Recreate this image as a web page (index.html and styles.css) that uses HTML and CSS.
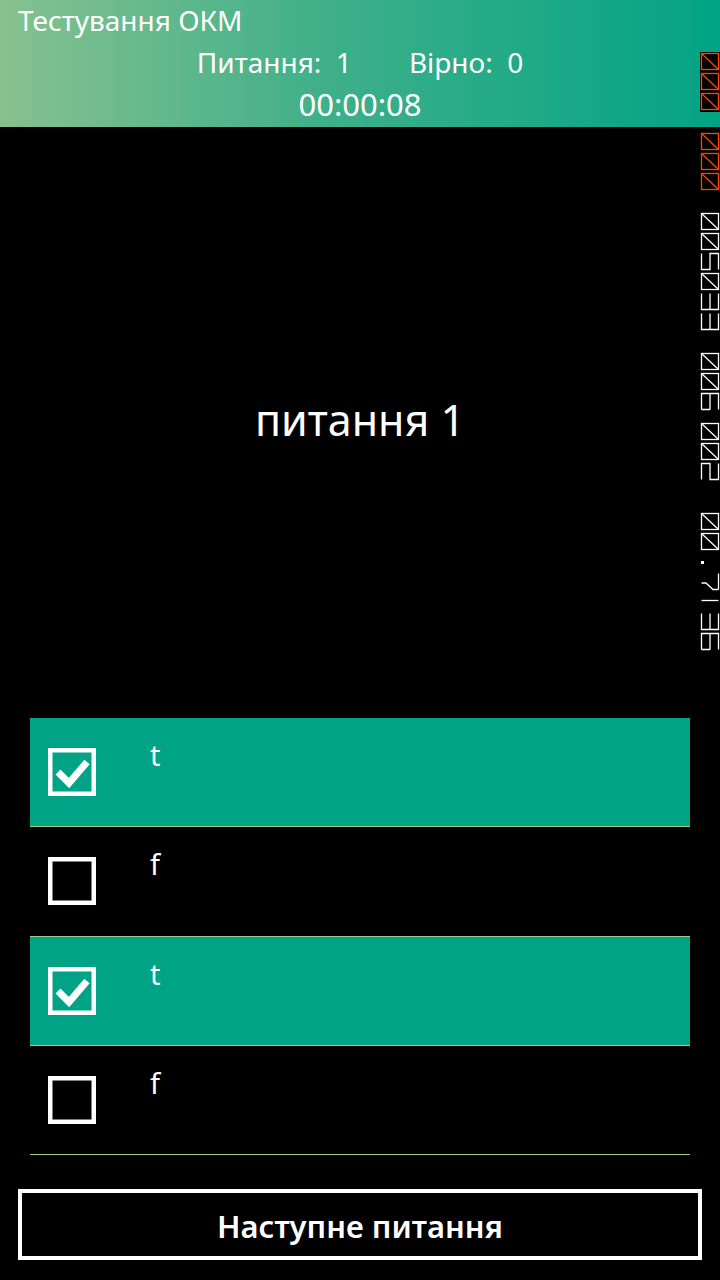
FILE: index.html
```html
<!DOCTYPE html>
<html lang="uk">
<head>
<meta charset="utf-8">
<title>Тестування ОКМ</title>
<link rel="stylesheet" href="styles.css">
</head>
<body>
<div class="screen">
  <header class="header">
    <div class="app-title">Тестування ОКМ</div>
    <div class="stats"><span class="stat">Питання:  1</span><span class="stat">Вірно:  0</span></div>
    <div class="timer">00:00:08</div>
  </header>

  <main class="question">
    <div class="question-text">питання 1</div>
  </main>

  <ul class="answers">
    <li class="answer checked">
      <svg class="checkbox" viewBox="0 0 48 48" width="48" height="48"><rect x="2.25" y="2.25" width="43.5" height="43.5"/><polyline points="10,24 21,35 39,14"/></svg>
      <span class="answer-text">t</span>
    </li>
    <li class="answer">
      <svg class="checkbox" viewBox="0 0 48 48" width="48" height="48"><rect x="2.25" y="2.25" width="43.5" height="43.5"/></svg>
      <span class="answer-text">f</span>
    </li>
    <li class="answer checked">
      <svg class="checkbox" viewBox="0 0 48 48" width="48" height="48"><rect x="2.25" y="2.25" width="43.5" height="43.5"/><polyline points="10,24 21,35 39,14"/></svg>
      <span class="answer-text">t</span>
    </li>
    <li class="answer">
      <svg class="checkbox" viewBox="0 0 48 48" width="48" height="48"><rect x="2.25" y="2.25" width="43.5" height="43.5"/></svg>
      <span class="answer-text">f</span>
    </li>
  </ul>

  <div class="footer">
    <button class="next-button" type="button">Наступне питання</button>
  </div>

  <svg class="fps-counter" viewBox="700 0 20 660" width="20" height="660">
    <defs>
      <g id="gD"><rect x="0.5" y="0.5" width="17" height="16"/><path d="M0.5 0.5L17.5 16.5"/></g>
      <path id="g5" d="M0.5 0.5V16.5H9V0.5H17.5V16.5"/>
      <path id="g3" d="M0.5 0.5V16.5H17.5V0.5M9 0.5V16.5"/>
      <path id="g6" d="M0.5 16.5V0.5H17.5V16.5M9 0.5V16.5M0.5 16.5H9"/>
      <path id="g2" d="M0.5 16.5V0.5H9V16.5H17.5V0.5"/>
      <path id="g7" d="M17.5 0.5V16.5M0.5 10H5L12 16.5H17.5"/>
      <path id="g1" d="M0.5 7.5H17.5"/>
    </defs>
    <rect class="fps-back" x="700" y="52" width="20" height="60"/>
    <g class="fps-warn">
      <use href="#gD" x="701" y="53"/>
      <use href="#gD" x="701" y="73"/>
      <use href="#gD" x="701" y="93"/>
      <use href="#gD" x="701" y="133"/>
      <use href="#gD" x="701" y="153"/>
      <use href="#gD" x="701" y="173"/>
    </g>
    <g class="fps-info">
      <use href="#gD" x="701" y="213"/>
      <use href="#gD" x="701" y="233"/>
      <use href="#g5" x="701" y="253"/>
      <use href="#gD" x="701" y="273"/>
      <use href="#g3" x="701" y="293"/>
      <use href="#g3" x="701" y="313"/>

      <use href="#gD" x="701" y="353"/>
      <use href="#gD" x="701" y="373"/>
      <use href="#g6" x="701" y="393"/>

      <use href="#gD" x="701" y="423"/>
      <use href="#gD" x="701" y="443"/>
      <use href="#g2" x="701" y="463"/>

      <use href="#gD" x="701" y="513"/>
      <use href="#gD" x="701" y="533"/>
      <rect class="fps-dot" x="701" y="561" width="3" height="3"/>
      <use href="#g7" x="701" y="573"/>
      <use href="#g1" x="701" y="593"/>
      <use href="#g3" x="701" y="613"/>
      <use href="#g6" x="701" y="633"/>
    </g>
  </svg>
</div>
</body>
</html>
```

FILE: styles.css
```css
* {
  box-sizing: border-box;
}

html,
body {
  margin: 0;
  padding: 0;
  background: #000;
}

body {
  font-family: "Noto Sans", "Open Sans", sans-serif;
  color: #fff;
}

.screen {
  position: relative;
  width: 720px;
  height: 1280px;
  display: flex;
  flex-direction: column;
  overflow: hidden;
  background: #000;
}

/* header */
.header {
  flex: none;
  height: 127px;
  display: flex;
  flex-direction: column;
  background: linear-gradient(90deg, #87c18f 0%, #3fb089 45%, #02a385 100%);
}

.app-title {
  font-size: 28px;
  line-height: 28px;
  padding: 6px 0 0 18px;
  white-space: nowrap;
}

.stats {
  display: flex;
  justify-content: center;
  gap: 57px;
  margin-top: 14px;
  font-size: 28px;
  line-height: 28px;
}

.stat {
  white-space: pre;
}

.timer {
  text-align: center;
  margin-top: 12px;
  font-size: 31px;
  line-height: 32px;
}

/* question */
.question {
  flex: 1;
  display: flex;
  align-items: center;
  justify-content: center;
}

.question-text {
  font-size: 43px;
  line-height: 1;
  padding-bottom: 6px;
}

/* answers */
.answers {
  flex: none;
  list-style: none;
  margin: 0 30px;
  padding: 0;
}

.answer {
  display: flex;
  height: 109.25px;
  padding-left: 18px;
  border-bottom: 1.5px solid #9ccf88;
}

.answer.checked {
  background: #00a386;
}

.checkbox {
  flex: none;
  align-self: center;
  fill: none;
  stroke: #fff;
}

.checkbox rect {
  stroke-width: 4.5;
}

.checkbox polyline {
  stroke-width: 7;
  stroke-linejoin: miter;
}

.answer-text {
  margin-left: 54px;
  margin-top: 22px;
  font-size: 29px;
  line-height: 29px;
}

/* footer */
.footer {
  flex: none;
  padding: 34px 18px 20px;
}

.next-button {
  display: block;
  width: 100%;
  height: 71px;
  margin: 0;
  padding: 3px 0 0;
  border: 4px solid #fff;
  background: #000;
  color: #fff;
  font-family: "Noto Sans", "Open Sans", sans-serif;
  font-size: 31px;
  font-weight: 600;
  line-height: 1;
}

/* frame rate counter overlay */
.fps-counter {
  position: absolute;
  top: 0;
  right: 0;
}

.fps-back {
  fill: #000;
}

.fps-warn {
  fill: none;
  stroke: #ff4500;
  stroke-width: 1.3;
}

.fps-info {
  fill: none;
  stroke: #fff;
  stroke-width: 1.3;
}

.fps-dot {
  fill: #fff;
  stroke: none;
}
```
